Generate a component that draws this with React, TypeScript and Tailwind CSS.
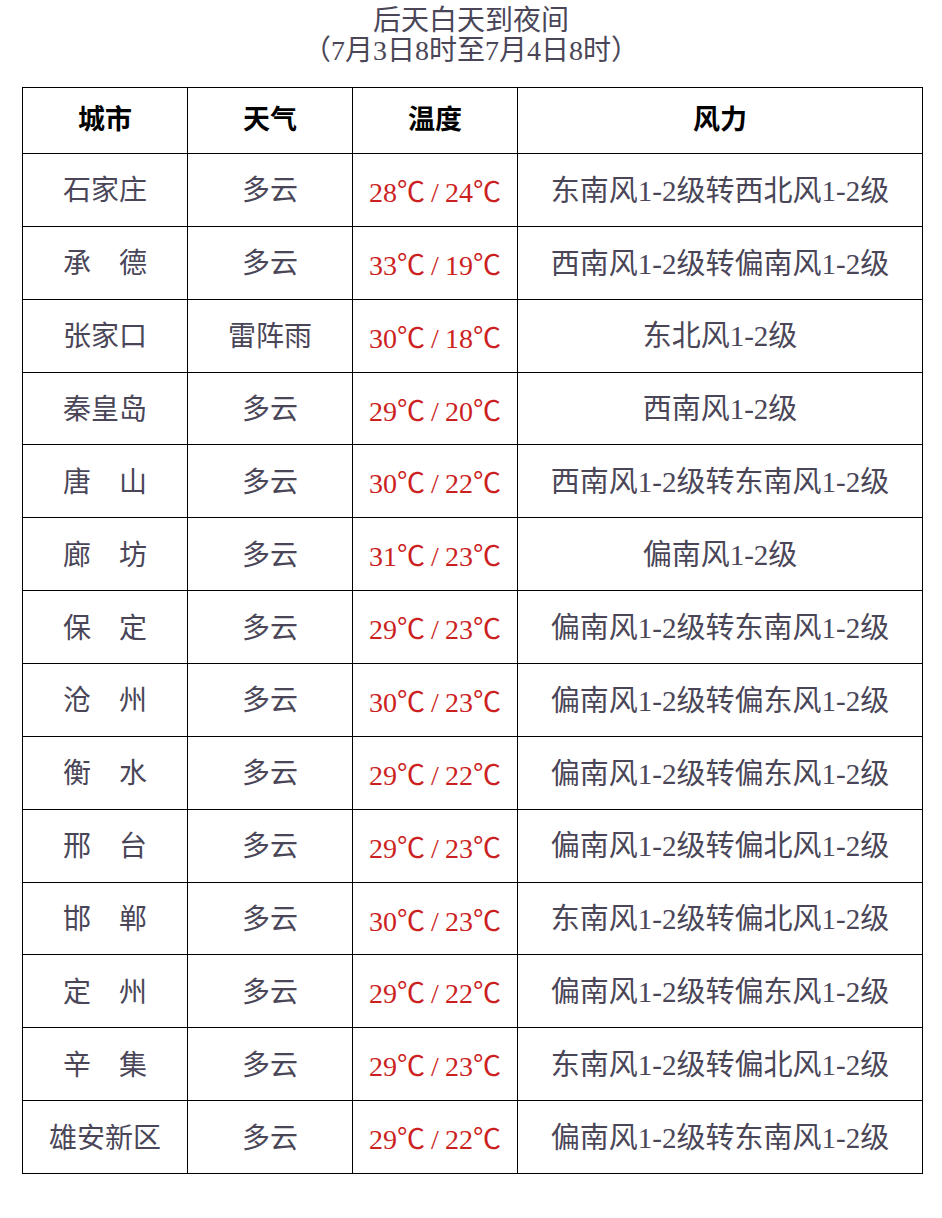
const rows: [string, string, string, string][] = [
  ["石家庄", "多云", "28/24", "东南风1-2级转西北风1-2级"],
  ["承　德", "多云", "33/19", "西南风1-2级转偏南风1-2级"],
  ["张家口", "雷阵雨", "30/18", "东北风1-2级"],
  ["秦皇岛", "多云", "29/20", "西南风1-2级"],
  ["唐　山", "多云", "30/22", "西南风1-2级转东南风1-2级"],
  ["廊　坊", "多云", "31/23", "偏南风1-2级"],
  ["保　定", "多云", "29/23", "偏南风1-2级转东南风1-2级"],
  ["沧　州", "多云", "30/23", "偏南风1-2级转偏东风1-2级"],
  ["衡　水", "多云", "29/22", "偏南风1-2级转偏东风1-2级"],
  ["邢　台", "多云", "29/23", "偏南风1-2级转偏北风1-2级"],
  ["邯　郸", "多云", "30/23", "东南风1-2级转偏北风1-2级"],
  ["定　州", "多云", "29/22", "偏南风1-2级转偏东风1-2级"],
  ["辛　集", "多云", "29/23", "东南风1-2级转偏北风1-2级"],
  ["雄安新区", "多云", "29/22", "偏南风1-2级转东南风1-2级"],
]

const font = { fontFamily: '"Liberation Serif", "Noto Sans CJK SC", serif' }
const cjk = { fontFamily: '"Noto Sans CJK SC", sans-serif' }

// 温度：数字用衬线，℃用全角
const Temp = ({ value }: { value: string }) => {
  const [hi, lo] = value.split("/")
  return (
    <span className="whitespace-nowrap">
      {hi}
      <span style={cjk}>℃</span>
      <span className="px-[6px]">/</span>
      {lo}
      <span style={cjk}>℃</span>
    </span>
  )
}

export default function App() {
  return (
    <div className="w-[942px] h-[1218px] bg-white" style={font}>
      {/* 标题 */}
      <div className="pt-[6px] h-[87px] text-center text-[#4a4658] text-[28px] leading-[30px]">
        <div>后天白天到夜间</div>
        <div>（7月3日8时至7月4日8时）</div>
      </div>

      <table className="ml-[22px] w-[900px] border-collapse table-fixed">
        <colgroup>
          <col className="w-[165px]" />
          <col className="w-[165px]" />
          <col className="w-[165px]" />
          <col className="w-[405px]" />
        </colgroup>
        <thead>
          <tr className="h-[66px] text-black text-[27px]">
            <th className="border-[1.5px] border-black font-semibold">城市</th>
            <th className="border-[1.5px] border-black font-semibold">天气</th>
            <th className="border-[1.5px] border-black font-semibold">温度</th>
            <th className="border-[1.5px] border-black font-semibold">风力</th>
          </tr>
        </thead>
        <tbody>
          {rows.map((r, i) => (
            <tr key={i} className="h-[72.86px] text-[28px] text-[#4a4658]">
              <td className="border-[1.5px] border-black text-center whitespace-nowrap pt-[3px]">{r[0]}</td>
              <td className="border-[1.5px] border-black text-center pt-[3px]">{r[1]}</td>
              <td className="border-[1.5px] border-black text-center text-[#cc1f1f] pt-[3px]">
                <Temp value={r[2]} />
              </td>
              <td className="border-[1.5px] border-black text-center whitespace-nowrap text-[29px] pt-[3px]">{r[3]}</td>
            </tr>
          ))}
        </tbody>
      </table>
    </div>
  )
}
